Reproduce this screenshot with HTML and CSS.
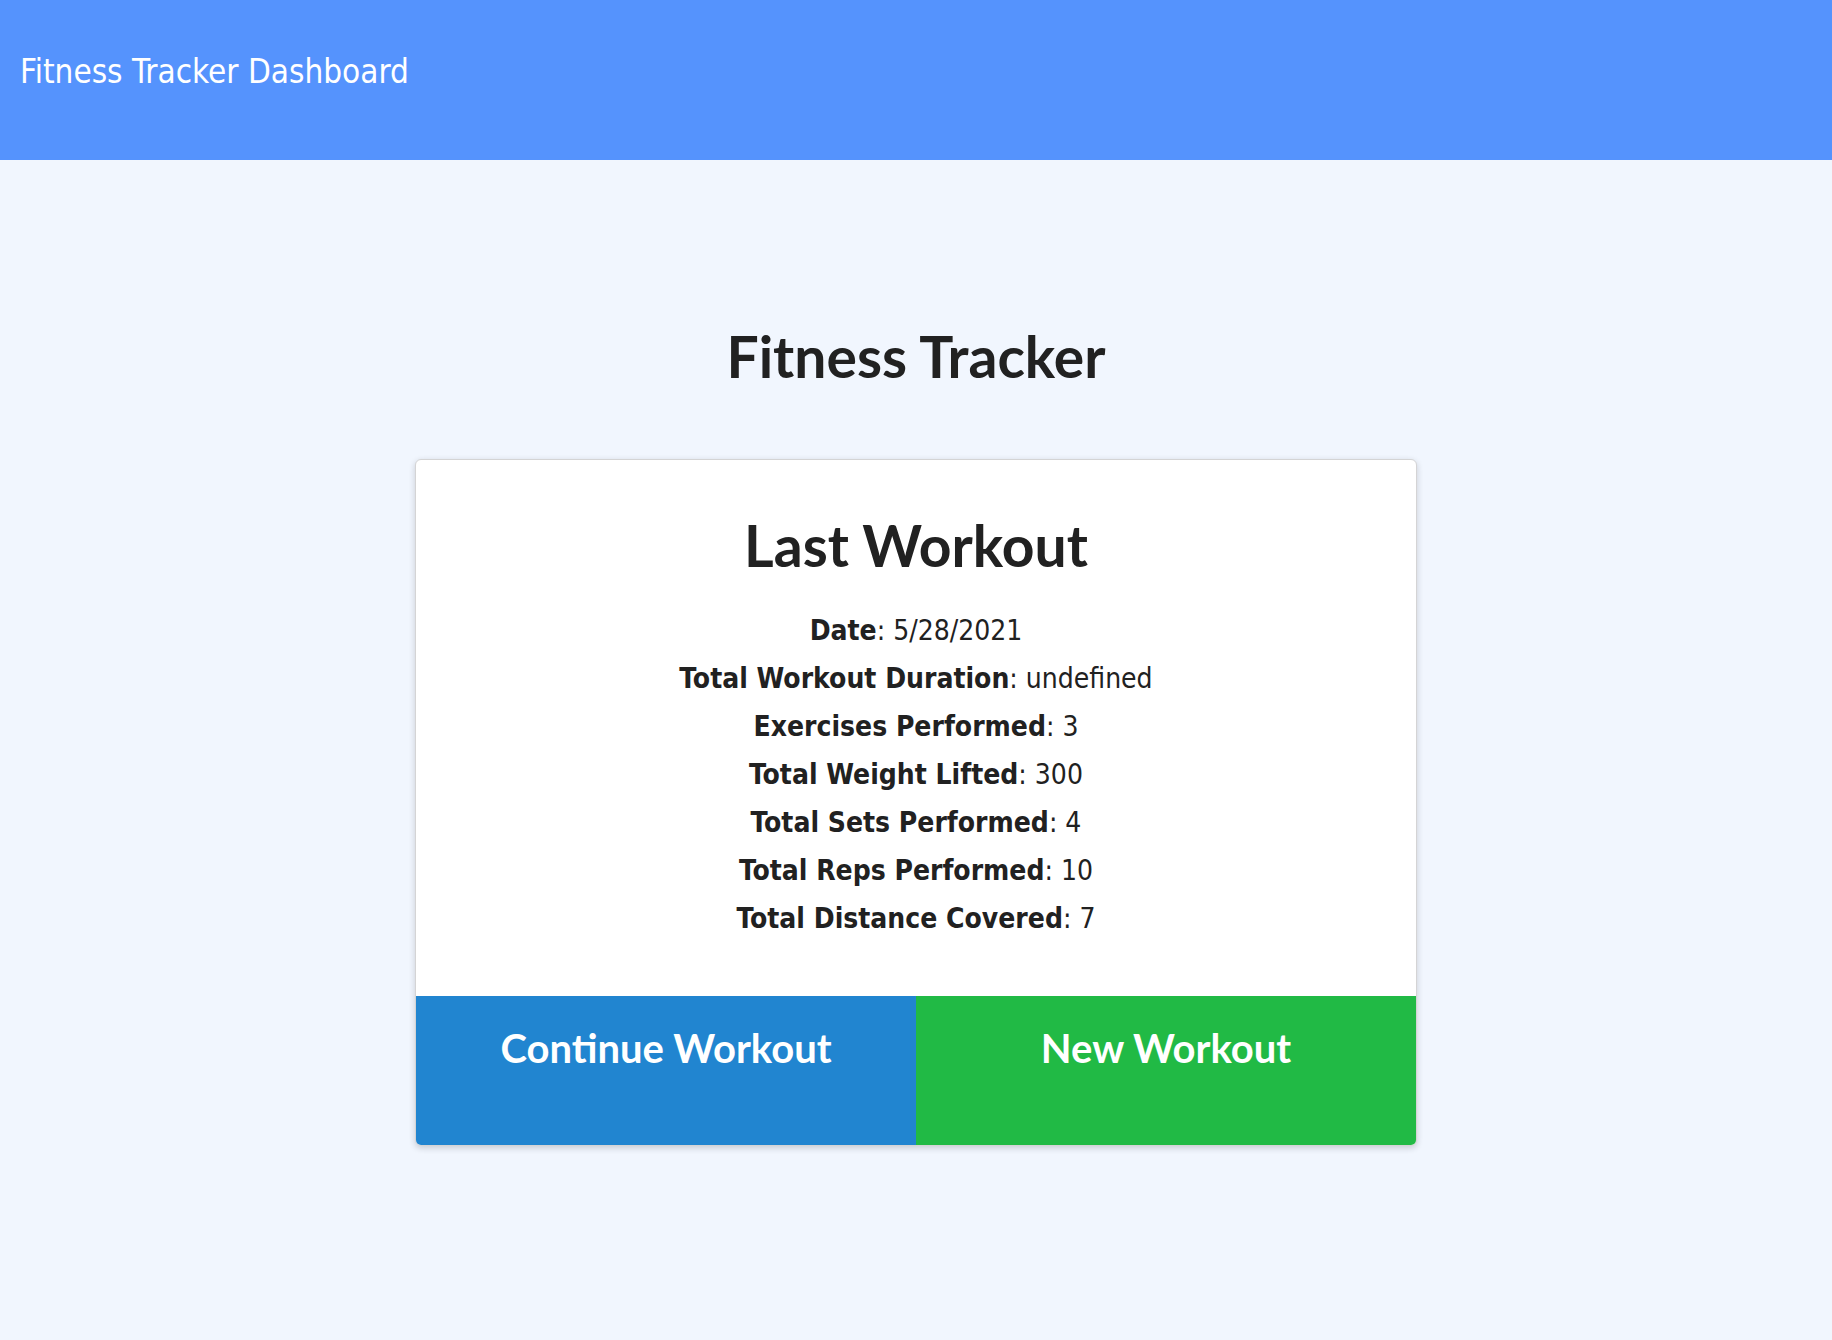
FILE: index.html
```html
<!DOCTYPE html>
<html lang="en">
<head>
    <meta charset="UTF-8">
    <meta name="viewport" content="width=device-width, initial-scale=1.0">
    <title>Fitness Tracker Dashboard</title>
    <link rel="stylesheet" href="styles.css">
</head>
<body>
    <header class="topbar">
        <span class="brand">Fitness Tracker Dashboard</span>
    </header>

    <main class="page">
        <h1 class="title">Fitness Tracker</h1>
        <div class="card">
            <div class="card-content">
                <h2 class="card-title">Last Workout</h2>
                <div class="stats">
                    <p><strong>Date</strong>: 5/28/2021</p>
                    <p><strong>Total Workout Duration</strong>: undefined</p>
                    <p><strong>Exercises Performed</strong>: 3</p>
                    <p><strong>Total Weight Lifted</strong>: 300</p>
                    <p><strong>Total Sets Performed</strong>: 4</p>
                    <p><strong>Total Reps Performed</strong>: 10</p>
                    <p><strong>Total Distance Covered</strong>: 7</p>
                </div>
            </div>
            <div class="card-buttons">
                <a class="btn btn-blue" href="#">Continue Workout</a>
                <a class="btn btn-green" href="#">New Workout</a>
            </div>
        </div>
    </main>
</body>
</html>
```

FILE: styles.css
```css
body {
    margin: 0;
    background: #f1f6fe;
    font-family: "DejaVu Sans Condensed", "DejaVu Sans", sans-serif;
    color: #212121;
    min-height: 100vh;
}
.topbar {
    background: #5593fd;
    height: 160px;
    box-sizing: border-box;
    padding: 52px 0 0 20px;
}
.brand {
    color: #fff;
    font-size: 33px;
    line-height: 40px;
}
.page {
    display: flex;
    flex-direction: column;
    align-items: center;
    padding-top: 168px;
}
.title {
    font-family: Lato, sans-serif;
    font-weight: 700;
    font-size: 57px;
    line-height: 1;
    margin: 0 0 74px 0;
}
.card {
    width: 1000px;
    background: #fff;
    border-radius: 6px;
    border: 1px solid #d4d4d5;
    box-shadow: 0 2px 6px rgba(34, 36, 38, 0.2);
    overflow: hidden;
}
.card-content {
    text-align: center;
    padding: 57px 20px 53px;
}
.card-title {
    font-family: Lato, sans-serif;
    font-weight: 700;
    font-size: 57px;
    line-height: 1;
    margin: 0 0 33px 0;
}
.stats p {
    margin: 0;
    font-size: 28px;
    line-height: 48px;
}
.card-buttons {
    display: flex;
}
.btn {
    flex: 1;
    height: 149px;
    box-sizing: border-box;
    padding-top: 28px;
    text-align: center;
    color: #fff;
    text-decoration: none;
    font-family: Lato, sans-serif;
    font-weight: 700;
    font-size: 40px;
}
.btn-blue {
    background: #2185d0;
}
.btn-green {
    background: #21ba45;
}
```
